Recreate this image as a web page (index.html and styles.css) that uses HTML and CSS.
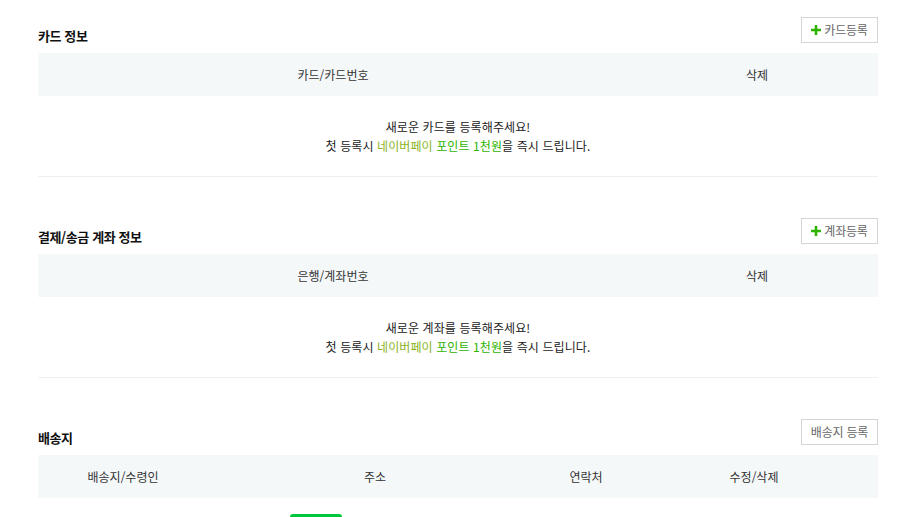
FILE: index.html
```html
<!DOCTYPE html>
<html lang="ko">
<head>
<meta charset="utf-8">
<title>결제수단 관리</title>
<link rel="stylesheet" href="styles.css">
</head>
<body>
<div class="page">
  <section class="section">
    <div class="head">
      <h2 class="title">카드 정보</h2>
      <button class="btn"><svg class="plus" viewBox="0 0 10 10"><path d="M5 0v10M0 5h10"/></svg>카드등록</button>
    </div>
    <div class="thead two">
      <div class="th">카드/카드번호</div>
      <div class="th del">삭제</div>
    </div>
    <div class="empty">
      <p>새로운 카드를 등록해주세요!</p>
      <p>첫 등록시 <span class="npay">네이버페이</span> <span class="point">포인트 1천원</span>을 즉시 드립니다.</p>
    </div>
  </section>

  <section class="section">
    <div class="head">
      <h2 class="title">결제/송금 계좌 정보</h2>
      <button class="btn"><svg class="plus" viewBox="0 0 10 10"><path d="M5 0v10M0 5h10"/></svg>계좌등록</button>
    </div>
    <div class="thead two">
      <div class="th">은행/계좌번호</div>
      <div class="th del">삭제</div>
    </div>
    <div class="empty">
      <p>새로운 계좌를 등록해주세요!</p>
      <p>첫 등록시 <span class="npay">네이버페이</span> <span class="point">포인트 1천원</span>을 즉시 드립니다.</p>
    </div>
  </section>

  <section class="section">
    <div class="head">
      <h2 class="title">배송지</h2>
      <button class="btn">배송지 등록</button>
    </div>
    <div class="thead four">
      <div class="th">배송지/수령인</div>
      <div class="th">주소</div>
      <div class="th">연락처</div>
      <div class="th">수정/삭제</div>
    </div>
    <div class="more"><span class="more-bar"></span></div>
  </section>
</div>
</body>
</html>
```
FILE: styles.css
```css
* { box-sizing: border-box; }
html, body { margin: 0; padding: 0; background: #fff; }
body {
  font-family: "Noto Sans CJK KR", "Noto Sans", sans-serif;
  font-size: 12px;
  color: #333;
  overflow: hidden;
}
.page {
  width: 840px;
  margin-left: 38px;
}
.section { padding-top: 17px; }
.section + .section { padding-top: 41px; }
.head {
  display: flex;
  justify-content: space-between;
  align-items: flex-end;
  height: 26px;
  margin-bottom: 10px;
}
.title {
  margin: 0 0 -1px;
  font-size: 13px;
  font-weight: 700;
  line-height: 16px;
  color: #111;
  letter-spacing: -0.4px;
}
.btn {
  display: flex;
  align-items: center;
  justify-content: center;
  gap: 3px;
  width: 77px;
  height: 26px;
  padding: 0;
  border: 1px solid #d5d5d5;
  background: #fff;
  font-family: inherit;
  font-size: 12px;
  line-height: 14px;
  color: #666;
  letter-spacing: -0.2px;
}
.plus {
  width: 10px;
  height: 10px;
  stroke: #2db400;
  stroke-width: 2.6;
  fill: none;
}
.thead {
  display: grid;
  height: 43px;
  background: #f5f8f9;
  align-items: center;
}
.thead.two { grid-template-columns: 590px 250px; }
.thead.four { grid-template-columns: 170px 334px 88px 248px; }
.th {
  text-align: center;
  line-height: 16px;
  color: #333;
}
.th.del { padding-left: 8px; }
.empty {
  height: 81px;
  padding-top: 21px;
  border-bottom: 1px solid #efefef;
  text-align: center;
  letter-spacing: 0.1px;
  color: #222;
}
.empty p { margin: 0; line-height: 19px; }
.npay { color: #8ab41c; }
.point { color: #2db400; }
.more {
  padding: 16px 0 0 252px;
}
.more-bar {
  display: block;
  width: 52px;
  height: 8px;
  background: #00c73c;
  border-radius: 3px 3px 0 0;
}
```
